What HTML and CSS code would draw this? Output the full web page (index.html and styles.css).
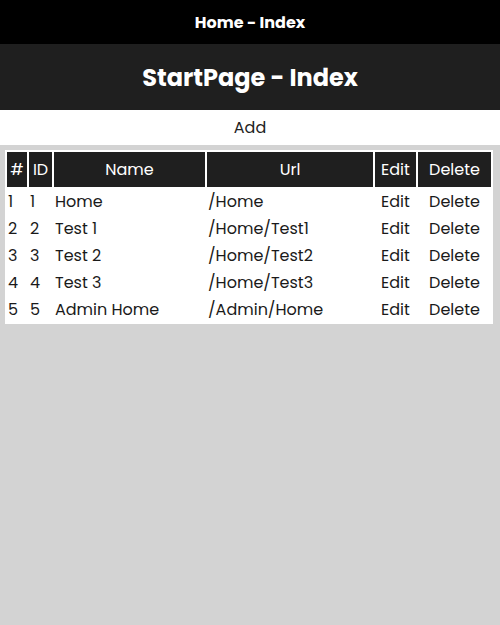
FILE: index.html
```html
<!DOCTYPE html>
<html>
<head>
<meta charset="utf-8">
<link rel="stylesheet" href="styles.css">
</head>
<body>
<header class="topbar">Home - Index</header>
<div class="titlebar"><h1 class="title">StartPage - Index</h1></div>
<div class="addbar"><a class="add" href="#">Add</a></div>
<main class="content">
<table class="grid">
<colgroup>
<col class="c-num"><col class="c-id"><col class="c-name"><col class="c-url"><col class="c-edit"><col class="c-del">
</colgroup>
<thead>
<tr><th>#</th><th>ID</th><th>Name</th><th>Url</th><th>Edit</th><th>Delete</th></tr>
</thead>
<tbody>
<tr><td>1</td><td>1</td><td>Home</td><td>/Home</td><td class="act"><a href="#">Edit</a></td><td class="act"><a href="#">Delete</a></td></tr>
<tr><td>2</td><td>2</td><td>Test 1</td><td>/Home/Test1</td><td class="act"><a href="#">Edit</a></td><td class="act"><a href="#">Delete</a></td></tr>
<tr><td>3</td><td>3</td><td>Test 2</td><td>/Home/Test2</td><td class="act"><a href="#">Edit</a></td><td class="act"><a href="#">Delete</a></td></tr>
<tr><td>4</td><td>4</td><td>Test 3</td><td>/Home/Test3</td><td class="act"><a href="#">Edit</a></td><td class="act"><a href="#">Delete</a></td></tr>
<tr><td>5</td><td>5</td><td>Admin Home</td><td>/Admin/Home</td><td class="act"><a href="#">Edit</a></td><td class="act"><a href="#">Delete</a></td></tr>
</tbody>
</table>
</main>
</body>
</html>
```
FILE: styles.css
```css
html, body {
  margin: 0;
  padding: 0;
  height: 100%;
}
body {
  background: #d3d3d3;
  font-family: "Poppins", "Inter", "Open Sans", sans-serif;
  font-size: 16px;
  color: #1a1a1a;
}
.topbar {
  background: #000;
  color: #fff;
  height: 44px;
  display: flex;
  align-items: center;
  justify-content: center;
  font-weight: 700;
  font-size: 16px;
}
.titlebar {
  background: #1f1f1f;
  height: 66px;
  display: flex;
  align-items: center;
  justify-content: center;
}
.title {
  margin: 0;
  color: #fff;
  font-size: 24px;
  font-weight: 700;
}
.addbar {
  background: #fff;
  height: 35px;
  display: flex;
  align-items: center;
  justify-content: center;
}
.add {
  color: #222;
  text-decoration: none;
  font-size: 16px;
}
.content {
  padding: 5px 7px 0 5px;
}
.grid {
  background: #fff;
  border-spacing: 2px;
  table-layout: fixed;
  width: 488px;
}
.c-num { width: 20px; }
.c-id { width: 23px; }
.c-name { width: 151px; }
.c-url { width: 166px; }
.c-edit { width: 41px; }
.c-del { width: 73px; }
.grid th {
  background: #1f1f1f;
  color: #fff;
  font-weight: 400;
  height: 35px;
  padding: 0;
  text-align: center;
}
.grid td {
  height: 25px;
  padding: 0 0 0 1px;
  white-space: nowrap;
  color: #1a1a1a;
}
.grid td.act {
  text-align: center;
  padding: 0;
}
.grid td.act a {
  color: #1a1a1a;
  text-decoration: none;
}
```
